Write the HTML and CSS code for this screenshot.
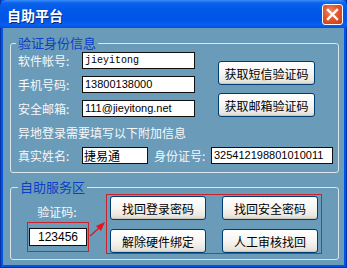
FILE: index.html
```html
<!DOCTYPE html>
<html lang="zh-CN">
<head>
    <meta charset="UTF-8">
    <title>自助平台</title>
    <link rel="stylesheet" href="styles.css">
</head>
<body>
    <div class="window">
        <div class="titlebar">
            <span class="title">自助平台</span>
            <div class="close">
                <svg width="13" height="13" viewBox="0 0 13 13">
                    <path d="M2 2 L11 11 M11 2 L2 11" stroke="#fff" stroke-width="2.4" stroke-linecap="square"/>
                </svg>
            </div>
        </div>

        <div class="client">
            <fieldset class="group group-id">
                <legend>验证身份信息</legend>
                <div class="id-top">
                    <div class="fields">
                        <div class="row">
                            <span class="label">软件帐号:</span>
                            <div class="edit edit-wide mono">jieyitong</div>
                        </div>
                        <div class="row">
                            <span class="label">手机号码:</span>
                            <div class="edit edit-wide">13800138000</div>
                        </div>
                        <div class="row">
                            <span class="label">安全邮箱:</span>
                            <div class="edit edit-wide">111@jieyitong.net</div>
                        </div>
                    </div>
                    <div class="sends">
                        <button class="btn btn-send">获取短信验证码</button>
                        <button class="btn btn-send">获取邮箱验证码</button>
                    </div>
                </div>
                <p class="note">异地登录需要填写以下附加信息</p>
                <div class="row row-extra">
                    <span class="label">真实姓名:</span>
                    <div class="edit edit-name">捷易通</div>
                    <span class="label label-id">身份证号:</span>
                    <div class="edit edit-idno">325412198801010011</div>
                </div>
            </fieldset>

            <fieldset class="group group-service">
                <legend>自助服务区</legend>
                <div class="service">
                    <div class="code-col">
                        <span class="code-label">验证码:</span>
                        <div class="code-mark">
                            <div class="edit edit-code">123456</div>
                        </div>
                    </div>
                    <svg class="arrow" width="17" height="24" viewBox="0 0 17 24">
                        <line x1="1" y1="20" x2="10" y2="12" stroke="#d8141c" stroke-width="1.2"/>
                        <polygon points="16,6 7,10 12,15" fill="#e8121a"/>
                    </svg>
                    <div class="actions">
                        <button class="btn">找回登录密码</button>
                        <button class="btn">找回安全密码</button>
                        <button class="btn">解除硬件绑定</button>
                        <button class="btn">人工审核找回</button>
                    </div>
                </div>
            </fieldset>
        </div>
    </div>
</body>
</html>
```

FILE: styles.css
```css
:root {
    --frame: #0054e3;
    --client: #6a9bb8;
    --line: #dbe6ed;
    --legend: #0c3fc4;
    --label: #f6f8fa;
    --mark: #c8242c;
    --btn-border: #003c74;
}

* {
    margin: 0;
    padding: 0;
    box-sizing: border-box;
}

body {
    font-family: "Noto Sans CJK SC", "Liberation Sans", sans-serif;
    font-size: 12px;
    background: #ffffff;
}

.window {
    width: 347px;
    height: 268px;
    background: var(--frame);
    border: 1px solid #0831a8;
    border-top: none;
    display: flex;
    flex-direction: column;
}

.titlebar {
    height: 28px;
    margin: 0 -1px;
    padding: 0 4px 0 7px;
    display: flex;
    align-items: center;
    justify-content: space-between;
    background: linear-gradient(#3c8ef7 0, #0a62ec 3px, #0058e8 10px, #0055e6 20px, #0a5ff0 25px, #0050d8 28px);
    border-radius: 6px 6px 0 0;
}

.title {
    color: #ffffff;
    font-size: 14px;
    font-weight: 700;
    line-height: 16px;
    text-shadow: 1px 1px 0 #0a2a88;
    margin-top: 1px;
}

.close {
    width: 21px;
    height: 21px;
    border: 1px solid #ffffff;
    border-radius: 3px;
    background: radial-gradient(circle at 40% 35%, #ee8a6a 0, #e0562e 45%, #c83a12 100%);
    display: flex;
    align-items: center;
    justify-content: center;
    margin-top: 1px;
}

.client {
    height: 237px;
    margin: 0 2px;
    background: var(--client);
    padding: 7px 5px 0 7px;
}

.group {
    border: 1px solid var(--line);
    border-radius: 3px;
    padding: 0 0 0 5px;
    min-width: 0;
}

.group legend {
    color: var(--legend);
    font-size: 13px;
    line-height: 16px;
    padding: 0 2px;
}

.group-id {
    padding-bottom: 8px;
}

.group-service {
    margin-top: 6px;
    padding-bottom: 5px;
}

.group-service legend {
    margin-left: 2px;
}

.id-top {
    display: flex;
    margin: 1px 0 0 2px;
}

.fields {
    display: flex;
    flex-direction: column;
    gap: 7px;
}

.row {
    display: flex;
    align-items: center;
    height: 17px;
}

.label {
    color: var(--label);
    width: 64px;
    line-height: 16px;
    font-size: 12px;
}

.edit {
    height: 17px;
    background: #ffffff;
    border: 1px solid #101010;
    color: #000000;
    font-family: "Liberation Sans", sans-serif;
    font-size: 11px;
    line-height: 15px;
    padding-left: 2px;
    white-space: nowrap;
    overflow: hidden;
}

.edit.mono {
    font-family: "Liberation Mono", monospace;
    font-size: 10px;
}

.edit-wide {
    width: 113px;
}

.sends {
    display: flex;
    flex-direction: column;
    gap: 8px;
    margin: 9px 0 0 23px;
}

.btn {
    font-family: "Noto Sans CJK SC", sans-serif;
    font-size: 12px;
    color: #000000;
    height: 24px;
    border: 1px solid var(--btn-border);
    border-radius: 3px;
    background: linear-gradient(#ffffff 0, #f6f5f2 50%, #e9e7e0 85%, #d8d3c8 100%);
    box-shadow: inset 0 -1px 0 #cdc8bc;
}

.btn-send {
    width: 97px;
}

.note {
    color: var(--label);
    line-height: 16px;
    margin: 8px 0 0 2px;
}

.row-extra {
    margin: 6px 0 0 2px;
}

.edit-name {
    width: 66px;
    font-family: "Noto Sans CJK SC", sans-serif;
    font-size: 12px;
    padding-left: 1px;
}

.label-id {
    width: 57px;
    margin-left: 6px;
}

.edit-idno {
    width: 122px;
}

.service {
    display: flex;
    align-items: flex-start;
    margin: -1px 0 0 11px;
}

.code-col {
    width: 62px;
    display: flex;
    flex-direction: column;
    align-items: center;
    margin-top: 10px;
}

.code-label {
    color: var(--label);
    line-height: 16px;
    margin-left: -2px;
}

.code-mark {
    margin-top: 2px;
    border: 1px solid var(--mark);
    padding: 5px 1px;
}

.edit-code {
    width: 58px;
    height: 18px;
    text-align: center;
    font-size: 12px;
    padding: 0;
    line-height: 16px;
}

.arrow {
    margin-top: 22px;
}

.actions {
    display: grid;
    grid-template-columns: 96px 96px;
    column-gap: 16px;
    row-gap: 9px;
    border: 1px solid var(--mark);
    padding: 1px 3px 0 3px;
}
```
